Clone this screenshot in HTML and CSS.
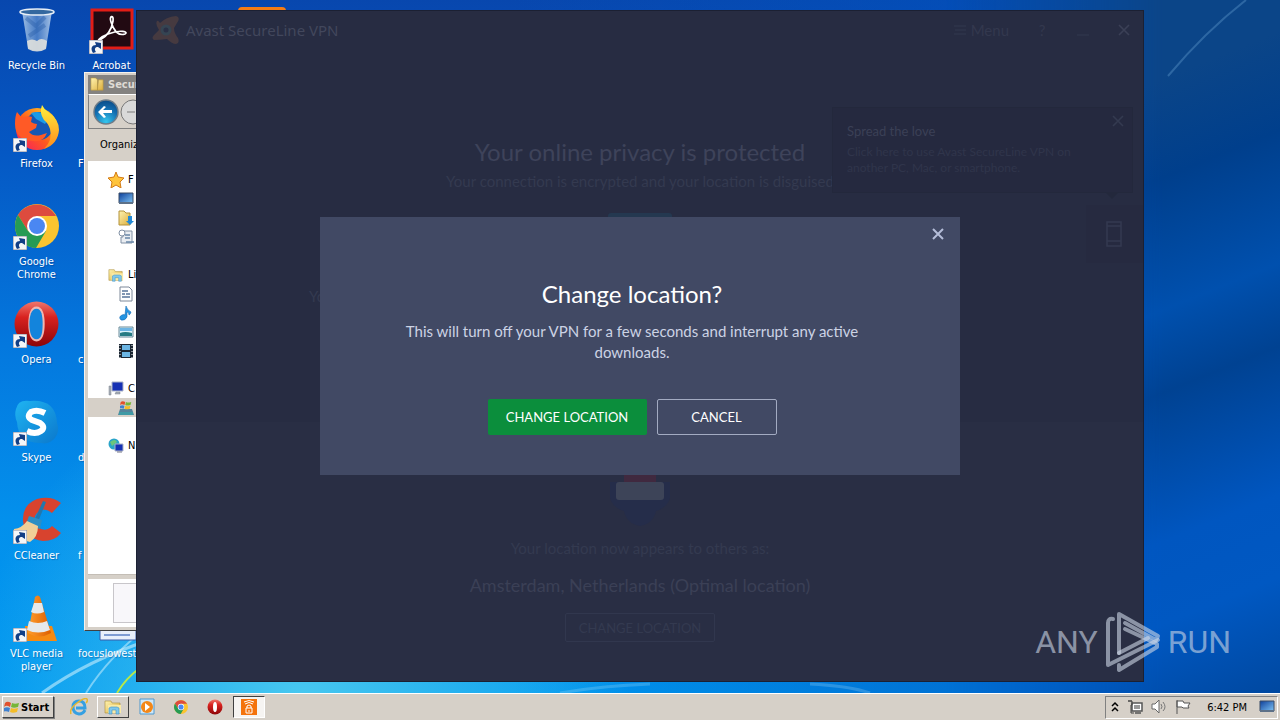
FILE: index.html
```html
<!DOCTYPE html>
<html lang="en">
<head>
<meta charset="utf-8">
<title>Avast SecureLine VPN</title>
<link rel="stylesheet" href="styles.css">
</head>
<body>
<svg class="defs" aria-hidden="true">
  <defs>
    <linearGradient id="gFolder" x1="0" x2="1" y1="0" y2="1"><stop offset="0" stop-color="#fff3b0"/><stop offset="1" stop-color="#dcae3c"/></linearGradient>
    <linearGradient id="gScreen" x1="0" x2="1" y1="0" y2="1"><stop offset="0" stop-color="#0d3f9a"/><stop offset="1" stop-color="#7fc4f4"/></linearGradient>
    <linearGradient id="gOpera" x1="0" x2="0" y1="0" y2="1"><stop offset="0" stop-color="#f0776c"/><stop offset=".35" stop-color="#d8221f"/><stop offset="1" stop-color="#8c0508"/></linearGradient>
    <linearGradient id="gFox" x1="0" x2="1" y1="1" y2="0"><stop offset="0" stop-color="#f5156c"/><stop offset=".45" stop-color="#ff5a1c"/><stop offset="1" stop-color="#ffe226"/></linearGradient>
    <linearGradient id="gTail" x1="0" x2="0" y1="0" y2="1"><stop offset="0" stop-color="#fff03c"/><stop offset="1" stop-color="#ff8a1c"/></linearGradient>
    <linearGradient id="gSkype" x1="0" x2="1" y1="0" y2="1"><stop offset="0" stop-color="#1fb4f2"/><stop offset="1" stop-color="#0b78cc"/></linearGradient>
    <linearGradient id="gBin" x1="0" x2="1" y1="0" y2="0"><stop offset="0" stop-color="#b9d3ec" stop-opacity=".85"/><stop offset=".5" stop-color="#6f9bd2" stop-opacity=".6"/><stop offset="1" stop-color="#c4d9f0" stop-opacity=".85"/></linearGradient>
    <linearGradient id="gCone" x1="0" x2="1" y1="0" y2="0"><stop offset="0" stop-color="#ff9d2c"/><stop offset="1" stop-color="#dc5e00"/></linearGradient>
    <radialGradient id="gNav" cx=".5" cy=".9" r=".9"><stop offset="0" stop-color="#34c6ee"/><stop offset=".6" stop-color="#136db0"/><stop offset="1" stop-color="#0a4a86"/></radialGradient>
    <symbol id="shortcut" viewBox="0 0 14 14"><path d="M0 0h14v14H0z" fill="#f4f6f8" stroke="#889" stroke-width="1"/><path d="M4 13C1 8 3 5 7 5L6 2l6 1v6L9 7c-3 0-4 2-2 5z" fill="#123f86"/></symbol>
    <symbol id="chrome" viewBox="0 0 44 44"><circle cx="22" cy="22" r="22" fill="#fbc42f"/><path d="M3 11A22 22 0 0 1 41 12H22L13 27z" fill="#dd4b3e"/><path d="M3 11A22 22 0 0 0 21 44L31 27 22 31 13 27z" fill="#269b54"/><circle cx="22" cy="22" r="10" fill="#fff"/><circle cx="22" cy="22" r="8" fill="#4a87f2"/></symbol>
    <symbol id="opera" viewBox="0 0 44 44"><ellipse cx="22" cy="22" rx="21.500" ry="22" fill="url(#gOpera)"/><path fill="#f0b8b2" d="M22 5c-6 0-8 8-8 17s2 17 8 17 8-8 8-17S28 5 22 5z"/><path fill="#1384dc" d="M22 7c-5 0-7 7-7 15s2 15 7 15 6-7 6-15-1-15-6-15z"/></symbol>
    <symbol id="folders" viewBox="0 0 18 16"><path d="M1 2h6l1 2h8v10H1z" fill="url(#gFolder)" stroke="#a98b36" stroke-width=".6"/><path d="M4 6h13v8H4z" fill="#fbeaa4"/><path d="M5 15V9l2-1h6l2 1v6h-3v-4H8v4z" fill="#7fc7ec" stroke="#4293c4" stroke-width=".6"/></symbol>
    <symbol id="flag" viewBox="0 0 16 16"><path d="M1 4c2-2 4-1 6 0l-1 4C4 7 2 6 0 8z" fill="#e2502c"/><path d="M8 4c2 1 4 1 7 0l-1 4c-3 1-5 1-7 0z" fill="#76b637"/><path d="M0 9c2-1 4-1 6 0l-1 4c-2-1-4-1-6 0z" fill="#3f80cf"/><path d="M7 9c2 1 4 1 7 0l-1 4c-3 1-5 1-7 0z" fill="#f5bd27"/></symbol>
    <symbol id="monitor" viewBox="0 0 16 16"><path d="M1 2h14v10H1z" fill="url(#gScreen)" stroke="#3a4c66"/><path d="M1 11h14v2H1z" fill="#5d7188"/></symbol>
    <symbol id="cross" viewBox="0 0 14 14"><path d="M2 2l10 10M12 2L2 12" fill="none" stroke="currentColor" stroke-width="1.6"/></symbol>
  </defs>
</svg>

<div class="screen">
  <main class="desktop">
    <svg class="wallpaper" viewBox="0 0 1280 693" preserveAspectRatio="none" aria-hidden="true">
      <g fill="none" stroke="#d8f6ff">
        <path d="M42 693Q88 660 150 640" stroke-width="3" opacity=".55"/>
        <path d="M86 693Q110 655 150 625" stroke-width="2" opacity=".5"/>
        <path d="M117 693Q126 678 140 668" stroke="#b8e848" stroke-width="2"/>
        <path d="M560 693Q600 686 650 684M810 684Q850 686 870 693" stroke-width="3" opacity=".2"/>
      </g>
    </svg>
    <svg class="streak" viewBox="0 0 90 80" aria-hidden="true"><path d="M8 76Q45 32 86 0" fill="none" stroke="#6da6d8" stroke-width="2" opacity=".35"/></svg>

    <nav class="icons" aria-label="Desktop">
      <div class="shortcut"><svg viewBox="0 0 48 48"><path d="M9 5l6 37q9 5 18 0l6-37z" fill="url(#gBin)"/><path d="M14 35l1 8q9 5 18 0l1-8q-6-4-10 0-5-3-10 0z" fill="#dfe0dd" opacity=".9"/><path d="M13 12l10 8 9-9M16 30l16-11" stroke="#275ca8" stroke-width="4" opacity=".4" fill="none"/><ellipse cx="24" cy="6" rx="17" ry="3" fill="#34689f" stroke="#e7eef6" stroke-width="1.500"/></svg><span>Recycle Bin</span></div>
      <div class="shortcut"><svg viewBox="0 0 48 48"><circle cx="24" cy="25" r="21" fill="url(#gFox)"/><circle cx="26" cy="22" r="14" fill="#1657b4"/><path d="M18 9q12-4 17 7l-3 4-9-5z" fill="#1b9be6"/><path d="M4 8l5 6q5-3 10-1l-1 5q3 2 6 2l-1 4-7 4q4 5 12 3l6-2q-4 10-14 8Q2 36 2 20 2 12 4 8z" fill="#ff5a26"/><path d="M29 1q2 4 6 7 11 7 11 18-1 14-15 19 9-9 6-20-2-6-6-9-5-7-2-15z" fill="url(#gTail)"/><use href="#shortcut" x="0" y="34" width="14" height="14"/></svg><span>Firefox</span></div>
      <div class="shortcut"><svg viewBox="0 0 48 48"><use href="#chrome" x="2" y="2" width="44" height="44"/><use href="#shortcut" x="0" y="34" width="14" height="14"/></svg><span>Google<br>Chrome</span></div>
      <div class="shortcut"><svg viewBox="0 0 48 48"><use href="#opera" x="1" y="1" width="45" height="46"/><use href="#shortcut" x="0" y="34" width="14" height="14"/></svg><span>Opera</span></div>
      <div class="shortcut"><svg viewBox="0 0 48 48"><path d="M3 11Q5 1 17 3 43 1 44 25 47 33 42 40 36 47 28 45 5 45 4 24 1 17 3 11z" fill="url(#gSkype)"/><path d="M32 15q-8-4-14-1-5 5 1 8l8 3q6 4 1 8-6 4-14 0" fill="none" stroke="#fff" stroke-width="6"/><use href="#shortcut" x="0" y="34" width="14" height="14"/></svg><span>Skype</span></div>
      <div class="shortcut"><svg viewBox="0 0 48 48"><path d="M48 7Q38-1 24 3 9 9 10 25q2 18 20 20 12 0 18-8l-9-7q-7 7-14 1-7-7-1-14 7-7 15 0z" fill="#d8432e"/><path d="M30 5l3 1-8 20-4-1z" fill="#2377ad"/><path d="M16 20l13 4-2 9-14-5z" fill="#2d8ec4"/><path d="M14 25l11 5q0 11-8 16l-14-4q-3-5-2-9 8-1 13-8z" fill="#f1cf98"/><use href="#shortcut" x="0" y="34" width="14" height="14"/></svg><span>CCleaner</span></div>
      <div class="shortcut"><svg viewBox="0 0 48 48"><path d="M12 32h27l5 15H12z" fill="#f58a12"/><path d="M22 3q3-3 5 0l11 36q-12 7-23 0z" fill="url(#gCone)"/><path d="M21 9h8l2 9q-7 3-13 0zM16 27q9 4 18 0l3 9q-12 5-23 0z" fill="#e6e9ea"/><use href="#shortcut" x="0" y="34" width="14" height="14"/></svg><span>VLC media<br>player</span></div>

      <div class="shortcut"><svg viewBox="0 0 48 48"><path d="M4 4h40v38H4z" fill="#220a12" stroke="#e31d16" stroke-width="3"/><path d="M12 34q11-6 13-19c1-7-4-5-2 1q5 15 14 12c4-2-4-5-17 0-8 3-12 8-8 6z" fill="none" stroke="#fff" stroke-width="1.700"/><use href="#shortcut" x="1" y="34" width="14" height="14"/></svg><span>Acrobat</span></div>
      <div class="shortcut partial"><span>F</span></div>
      <div class="shortcut partial"></div>
      <div class="shortcut partial"><span>co</span></div>
      <div class="shortcut partial"><span>d</span></div>
      <div class="shortcut partial"><span>f</span></div>
      <div class="shortcut partial"><svg viewBox="0 0 48 48"><path d="M10 28h36v18H10z" fill="#e8effa" stroke="#3b5ca8"/><path d="M14 41h26" stroke="#5d80c4" stroke-width="1.500"/></svg><span>focuslowest.</span></div>
    </nav>
    <i class="orange-tab"></i>

    <section class="explorer" aria-label="Explorer">
      <header class="ex-title"><svg viewBox="0 0 16 16"><path d="M1 1h5l2 2v11H1zM9 3h5v11H8z" fill="url(#gFolder)" stroke="#b3923a" stroke-width=".6"/></svg>Secur</header>
      <div class="ex-nav"><svg viewBox="0 0 48 30"><circle cx="42" cy="15" r="12" fill="#d9d9d9" stroke="#777"/><circle cx="15" cy="15" r="12" fill="url(#gNav)" stroke="#6f7c88" stroke-width="1.500"/><path d="M13 9l-6 6 6 6 2-1-3-4h9v-3h-9l3-3z" fill="#fff"/><path d="M36 15h8" stroke="#aaa" stroke-width="2"/></svg></div>
      <div class="ex-tools">Organiz</div>
      <div class="ex-tree">
        <ul>
          <li><svg viewBox="0 0 16 16"><path d="M8 0l2 5 6 1-4 4 1 6-5-3-5 3 1-6-4-4 6-1z" fill="#ffc43b" stroke="#d27a14"/></svg>F</li>
          <li class="sub"><svg><use href="#monitor"/></svg></li>
          <li class="sub"><svg viewBox="0 0 16 16"><path d="M1 1h5l2 2h4v12H1z" fill="url(#gFolder)" stroke="#b3923a"/><path d="M10 6h4v5h2l-4 4-4-4h2z" fill="#2389d6"/></svg></li>
          <li class="sub"><svg viewBox="0 0 16 16"><path d="M5 2h9v12H3V8h2z" fill="#e9edf2" stroke="#8090a4"/><circle cx="4" cy="4" r="3" fill="#fff" stroke="#8090a4"/><path d="M7 6h5M7 9h5M8 13h8" stroke="#6886a8" stroke-width="1.500"/></svg></li>
        </ul>
        <ul>
          <li><svg><use href="#folders"/></svg>Li</li>
          <li class="sub"><svg viewBox="0 0 16 16"><path d="M2 1h9l3 3v11H2z" fill="#fff" stroke="#7c8899"/><path d="M4 5h6M4 8h3M4 11h8M8 8h4" stroke="#59769b" stroke-width="1.400"/></svg></li>
          <li class="sub"><svg viewBox="0 0 16 16"><path d="M8 1q1 4 5 6-1 3-2 3 0-3-2-3v5q-2 4-6 3-3-3 1-5 2-1 3 0z" fill="#2494e2" stroke="#116ab5" stroke-width=".6"/></svg></li>
          <li class="sub"><svg viewBox="0 0 16 16"><path d="M1 3h14v10H1z" fill="#d9f2fb" stroke="#6b8a99"/><path d="M2 9q5-2 12 0v3H2z" fill="#267b84"/><path d="M2 4h12v3H2z" fill="#6db5e4"/></svg></li>
          <li class="sub"><svg viewBox="0 0 16 16"><path d="M1 1h14v14H1z" fill="#1b2632"/><path d="M4 2h8v5H4zM4 9h8v5H4z" fill="#6bb5e3"/><path d="M2 2v13M14 2v13" stroke="#fff" stroke-width="1" stroke-dasharray="1 2"/></svg></li>
        </ul>
        <ul>
          <li><svg viewBox="0 0 16 16"><path d="M4 1h11v9H4z" fill="#1631b4" stroke="#aab3c6"/><path d="M1 5h2v9H1zM8 11h4v2H7z" fill="#a9b0b8" stroke="#78818c" stroke-width=".5"/></svg>C</li>
          <li class="sub selected"><svg viewBox="0 0 16 16"><path d="M2 9h12l2 6H0z" fill="#53849b"/><path d="M1 12h14v3H1z" fill="#3f9aa5"/><use href="#flag" x="2" y="-1" width="12" height="12"/></svg></li>
        </ul>
        <ul>
          <li><svg viewBox="0 0 16 16"><circle cx="6" cy="6" r="5.500" fill="#2aa4c9"/><path d="M2 4q5-4 7 0l-5 4z" fill="#6cc67c"/><path d="M7 6h8v7H7z" fill="#1631b4" stroke="#aab3c6"/><path d="M9 14h5" stroke="#778"/></svg>N</li>
        </ul>
      </div>
      <div class="ex-details"><i></i></div>
    </section>

    <section class="vpn" aria-label="Avast SecureLine VPN">
      <header class="vpn-bar">
        <svg class="logo" viewBox="0 0 28 28"><path d="M8 7Q14 1 24 0q5 1 1 7l-3 5q0 5 4 10 2 5-2 6-4 0-9-5-7 1-13 1-3-2 0-5l5-5Q3 8 5 5q1-1 3 2z" fill="#463a40"/><circle cx="14" cy="14" r="4" fill="#2a2f45" stroke="#354452" stroke-width="3"/></svg>
        <span class="app-name">Avast SecureLine VPN</span>
        <button class="menu"><svg viewBox="0 0 12 12"><path d="M0 2h12M1 6h11M0 10h12" stroke="currentColor" stroke-width="1"/></svg>Menu</button>
        <button class="tool">?</button>
        <button class="tool" aria-label="Minimize"><svg viewBox="0 0 14 14"><path d="M1 12h12" stroke="currentColor"/></svg></button>
        <button class="tool close" aria-label="Close"><svg><use href="#cross"/></svg></button>
      </header>

      <div class="status">
        <h1>Your online privacy is protected</h1>
        <p>Your connection is encrypted and your location is disguised</p>
        <i class="toggle"></i>
        <span class="peek">Yo</span>
      </div>
      <div class="location">
        <svg class="country" viewBox="0 0 60 60"><path d="M14 0h32v8H14z" fill="#40293f"/><path d="M0 8h60v16q-3 10-14 13-3 13-16 15-13-2-16-15Q3 34 0 24z" fill="#252d4a"/><rect x="6" y="8" width="48" height="18" rx="3" fill="#3d4458"/></svg>
        <p>Your location now appears to others as:</p>
        <h2>Amsterdam, Netherlands (Optimal location)</h2>
        <button class="change">CHANGE LOCATION</button>
      </div>

      <aside class="callout">
        <button class="callout-close" aria-label="Dismiss"><svg><use href="#cross"/></svg></button>
        <h3>Spread the love</h3>
        <p>Click here to use Avast SecureLine VPN on another PC, Mac, or smartphone.</p>
      </aside>
      <button class="device" aria-label="Devices"><svg viewBox="0 0 16 26"><path d="M1 1h14v24H1zM1 5h14M1 20h14" fill="none" stroke="currentColor" stroke-width="1.500"/></svg></button>

      <div class="modal" role="dialog" aria-labelledby="dlg">
        <button class="modal-close" aria-label="Close dialog"><svg viewBox="0 0 14 14"><path d="M2 2l10 10M12 2L2 12" fill="none" stroke="currentColor" stroke-width="2"/></svg></button>
        <h2 id="dlg">Change location?</h2>
        <p>This will turn off your VPN for a few seconds and interrupt any active downloads.</p>
        <div class="actions">
          <button class="primary">CHANGE LOCATION</button>
          <button class="secondary">CANCEL</button>
        </div>
      </div>
    </section>

    <div class="watermark">
      <span>ANY</span>
      <svg viewBox="0 0 56 62" aria-hidden="true"><g fill="none" stroke="currentColor" stroke-width="4" stroke-linejoin="round" stroke-linecap="round"><path d="M14 42V3l39 22-2 4-31-17"/><path d="M8 8Q3 7 3 12v42l50-25"/><path d="M20 18l32 15v3L14 59v-5"/><path d="M14 42l29-15"/></g></svg>
      <span>RUN</span>
    </div>
  </main>

  <footer class="taskbar">
    <button class="start"><svg><use href="#flag"/></svg>Start</button>
    <div class="tasks">
      <button aria-label="Internet Explorer"><svg viewBox="0 0 18 18"><path d="M15 12q-2 4-6 4-6-1-6-7t6-6q6 0 6 7H6" fill="none" stroke="#35a0e2" stroke-width="3"/><path d="M1 16q-2-5 6-11t10-4q1 2-1 4" fill="none" stroke="#e6b62e" stroke-width="1.500"/></svg></button>
      <button class="raised" aria-label="Windows Explorer"><svg><use href="#folders"/></svg></button>
      <button aria-label="Media Player"><svg viewBox="0 0 18 18"><path d="M2 1h14v15H2z" fill="#cfe7f8" stroke="#4e99cf"/><circle cx="9" cy="9" r="6" fill="#f38718"/><path d="M7 5l5 4-5 4z" fill="#fff"/></svg></button>
      <button aria-label="Chrome"><svg viewBox="0 0 18 18"><use href="#chrome" x="2" y="2" width="14" height="14"/></svg></button>
      <button aria-label="Opera"><svg viewBox="0 0 18 18"><circle cx="9" cy="9" r="7.500" fill="url(#gOpera)"/><ellipse cx="9" cy="9" rx="2" ry="5" fill="#fff"/></svg></button>
      <button class="pressed" aria-label="SecureLine"><svg viewBox="0 0 18 18"><path d="M1 1h16v16H1z" fill="#f4730c"/><path d="M6 10h6v5H6zM7 10V8q2-2 4 0v2M5 6q4-3 8 0M4 4q5-3 10 0" fill="none" stroke="#fff"/><path d="M9 12v2" stroke="#fff"/></svg></button>
    </div>
    <div class="tray">
      <svg viewBox="0 0 8 16"><path d="M1 7l3-3 3 3M1 12l3-3 3 3" fill="none" stroke="#000" stroke-width="1.500"/></svg>
      <svg viewBox="0 0 16 16"><path d="M5 4h10v8H5zM8 14h6" fill="#fff" stroke="#555" stroke-width="1.500"/><path d="M7 6h6v4H7z" fill="#999"/><path d="M1 2h4v4H4v8h3M2 1v2M4 1v2" fill="none" stroke="#444"/></svg>
      <svg viewBox="0 0 16 16"><path d="M1 5h3l4-4v13l-4-4H1z" fill="#fff" stroke="#666"/><path d="M10 5q2 3 0 5M12 3q4 5 0 9" fill="none" stroke="#777"/></svg>
      <svg viewBox="0 0 16 16"><path d="M2 1v14M2 2h6l1 2h6l-2 3 1 2H8L7 8H2z" fill="#fff" stroke="#555"/></svg>
      <time>6:42 PM</time>
      <svg viewBox="0 0 16 16"><use href="#monitor"/></svg>
    </div>
  </footer>
</div>
</body>
</html>
```

FILE: styles.css
```css
* { box-sizing: border-box; }
body {
  margin: 0;
  font-family: "DejaVu Sans Condensed", "DejaVu Sans", sans-serif;
  font-size: 11px;
}
h1, h2, h3, p, ul { margin: 0; padding: 0; font-weight: 400; }
button { font: inherit; color: inherit; background: none; border: 0; padding: 0; }
svg { display: block; flex: none; }
.defs { position: absolute; width: 0; height: 0; }

.screen { display: flex; flex-direction: column; height: 100vh; min-height: 720px; overflow: hidden; }
.desktop {
  position: relative;
  flex: 1;
  background:
    radial-gradient(circle at 300px 700px, #48c8f0 0, rgba(40, 180, 240, 0) 330px),
    linear-gradient(90deg, rgba(0, 82, 190, 0) 40%, rgba(0, 82, 190, .8) 90%),
    linear-gradient(180deg, #0847ae 0, #0558c4 22%, #0478de 50%, #0390ec 75%, #0098f0 100%);
}
.desktop::before {
  content: "";
  position: absolute;
  inset: 0 0 0 auto;
  width: 26%;
  background: linear-gradient(158deg, #0b4588 0, #0b4588 20%, #003f8c 32%, #0050ae 48%, #004292 58%, #0056c0 76%, #0058c2 86%, #0048a0 100%);
  -webkit-mask-image: linear-gradient(90deg, transparent, #000 65%);
  mask-image: linear-gradient(90deg, transparent, #000 65%);
}
.wallpaper { position: absolute; inset: 0; width: 100%; height: 100%; }
.streak { position: absolute; top: 0; right: 30px; width: 90px; height: 80px; }

.icons {
  position: absolute;
  top: 6px;
  left: -1px;
  display: grid;
  grid-template-rows: repeat(7, 98px);
  grid-auto-flow: column;
  grid-auto-columns: 75px;
  color: #fff;
  line-height: 13px;
  text-align: center;
  text-shadow: 1px 1px 1px rgba(0, 20, 80, .3);
}
.shortcut { display: flex; flex-direction: column; align-items: center; }
.shortcut svg { width: 48px; height: 48px; margin-bottom: 5px; }
.shortcut span { white-space: nowrap; }
.partial { align-items: flex-start; padding-left: 4px; }
.partial span:first-child { padding-top: 53px; }
.partial svg { margin-left: 12px; }
.orange-tab { position: absolute; top: 7px; left: 238px; width: 48px; height: 8px; border-radius: 4px; background: #f57c14; }

.explorer {
  position: absolute;
  top: 72px;
  bottom: 62px;
  left: 84px;
  width: 120px;
  display: flex;
  flex-direction: column;
  padding: 2px 0 3px 3px;
  background: #d6d0c8;
  border: 1px solid #f4f2ee;
  border-bottom-color: #404040;
}
.ex-title { display: flex; align-items: center; gap: 3px; height: 19px; padding-left: 2px; background: #848280; color: #dedad4; font-weight: 700; }
.ex-title svg { width: 15px; height: 15px; }
.ex-nav { height: 35px; padding: 2px; border: 1px solid #808080; border-top-color: #fff; }
.ex-nav svg { width: 48px; height: 30px; }
.ex-tools { height: 32px; padding-left: 12px; line-height: 32px; }
.ex-tree { flex: 1; display: flex; flex-direction: column; gap: 19px; padding-top: 9px; background: #fff; border-bottom: 1px solid #c4beb6; }
.ex-tree ul { list-style: none; }
.ex-tree li { display: flex; align-items: center; gap: 4px; height: 19px; padding-left: 20px; }
.ex-tree li svg { width: 16px; height: 16px; }
.ex-tree .sub { padding-left: 30px; }
.selected { background: #d6d0c8; }
.ex-details { height: 48px; margin-top: 4px; padding: 4px 0 0 25px; background: #fff; }
.ex-details i { display: block; width: 60px; height: 40px; background: #f8f7fa; border: 1px solid #c8c6ca; }

.vpn {
  position: absolute;
  inset: 10px 136px 11px;
  display: flex;
  flex-direction: column;
  background: #272c42;
  border: 1px solid #1b2033;
  color: #343a50;
  font-family: Lato, sans-serif;
  font-size: 15px;
}
.vpn-bar { display: flex; align-items: center; height: 38px; padding: 0 12px 0 15px; color: #33384e; }
.logo { width: 28px; height: 28px; margin-right: 6px; }
.app-name { margin-right: auto; color: #42475c; font-family: "Noto Sans", sans-serif; font-size: 15px; }
.menu { display: flex; align-items: center; gap: 5px; margin-right: 26px; }
.menu svg { width: 12px; height: 12px; }
.tool { width: 14px; margin-left: 27px; }
.close { color: #3b4056; }
.menu + .tool { margin-left: 0; }
.tool svg { width: 14px; height: 14px; }
.status { position: relative; flex: 1; display: flex; flex-direction: column; align-items: center; padding-top: 88px; }
.status h1 { font-size: 24px; line-height: 30px; color: #3e435a; }
.status p { margin-top: 4px; line-height: 20px; font-size: 15px; }
.toggle { width: 64px; height: 40px; margin-top: 22px; border-radius: 3px; background: #243850; }
.peek { position: absolute; top: 238px; left: 172px; }
.location { flex: none; display: flex; flex-direction: column; align-items: center; height: 259px; padding-top: 52px; background: #292e44; }
.country { width: 60px; height: 60px; }
.location p { margin-top: 4px; line-height: 20px; }
.location h2 { margin-top: 15px; font-size: 18px; line-height: 24px; color: #3b4056; }
.change { width: 150px; height: 29px; margin-top: 16px; border: 1px solid #31374e; border-radius: 2px; font-size: 13px; }
.callout { position: absolute; top: 96px; right: 10px; width: 301px; height: 86px; padding: 14px 40px 14px 14px; background: #25293f; border: 1px solid #23283c; }
.callout h3 { font-size: 13px; line-height: 18px; color: #3b4056; }
.callout p { margin-top: 4px; font-size: 12px; line-height: 16px; color: #30354b; }
.callout::after { content: ""; position: absolute; right: 13px; bottom: -7px; border: solid transparent; border-width: 7px 7px 0; border-top-color: #23283c; }
.callout-close { position: absolute; top: 6px; right: 7px; }
.callout-close svg { width: 14px; height: 14px; }
.device { position: absolute; top: 194px; right: 0; width: 57px; height: 58px; padding-left: 20px; background: #262a40; }
.device svg { width: 16px; height: 26px; }

.modal {
  position: absolute;
  top: 50%;
  left: 50%;
  transform: translate(-50%, -50%);
  display: flex;
  flex-direction: column;
  align-items: center;
  width: 640px;
  padding: 62px 80px 40px 64px;
  background: #414964;
  color: #ccd3e4;
  text-align: center;
}
.modal h2 { color: #fff; font-size: 24px; line-height: 30px; }
.modal p { width: 470px; margin: 12px 0 36px; font-size: 15px; line-height: 21px; }
.modal-close { position: absolute; top: 10px; right: 15px; color: #b4bdd8; }
.modal-close svg { width: 14px; height: 14px; }
.actions { display: flex; gap: 10px; color: #fff; font-size: 13px; }
.actions button { height: 36px; border-radius: 2px; }
.primary { width: 159px; background: #0b8e3c; }
.secondary { width: 120px; border: 1px solid #a3abc2; }

.watermark { position: absolute; right: 49px; bottom: 20px; display: flex; align-items: center; gap: 7px; color: rgba(205, 215, 230, .6); font-family: Roboto, sans-serif; font-size: 32px; font-weight: 400; line-height: 62px; }
.watermark svg { width: 56px; height: 62px; }

.taskbar { display: flex; align-items: center; flex: none; height: 27px; padding: 1px 2px; background: #d6d0c8; border-top: 1px solid #fff; color: #000; }
.start { display: flex; align-items: center; gap: 1px; width: 52px; height: 22px; padding-left: 1px; border: 1px solid; border-color: #fff #404040 #404040 #fff; box-shadow: 1px 1px 0 #808080; font-size: 11px; font-weight: 700; }
.start svg { width: 16px; height: 16px; }
.tasks { display: flex; gap: 2px; margin-left: 9px; }
.tasks button { display: flex; align-items: center; justify-content: center; width: 32px; height: 22px; }
.tasks svg { width: 18px; height: 18px; }
.tasks .raised { border: 1px solid; border-color: #fff #404040 #404040 #fff; }
.tasks .pressed { border: 1px solid; border-color: #404040 #fff #fff #404040; background: #f6f4f2; }
.tray { display: flex; align-items: center; gap: 8px; height: 23px; margin-left: auto; padding: 0 2px 0 5px; border: 1px solid; border-color: #808080 #fff #fff #808080; }
.tray svg { width: 16px; height: 16px; }
.tray svg:first-child { width: 8px; }
.tray time { margin: 0 4px 0 8px; white-space: nowrap; }
```
